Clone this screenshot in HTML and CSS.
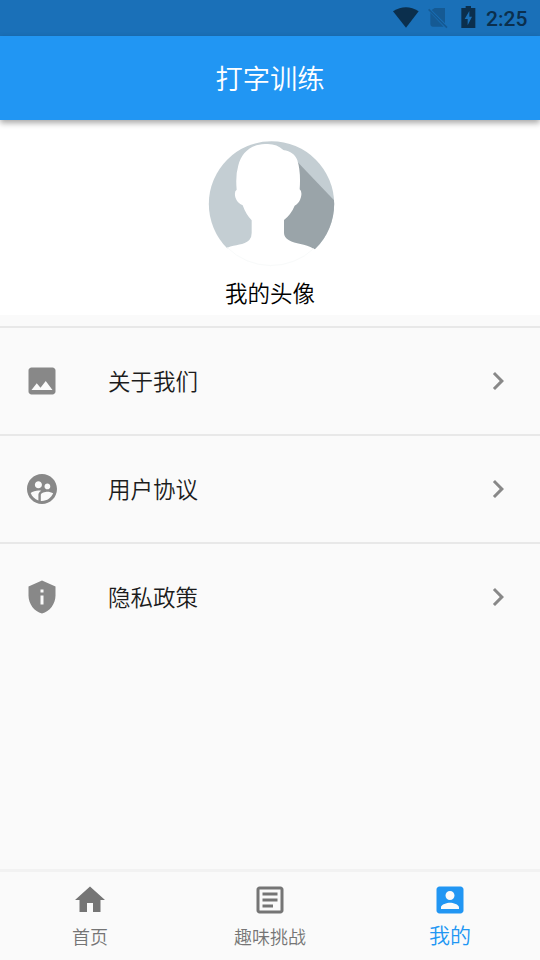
FILE: index.html
```html
<!DOCTYPE html>
<html lang="zh-CN">
<head>
<meta charset="utf-8">
<title>打字训练</title>
<link rel="stylesheet" href="styles.css">
</head>
<body>
<div class="app">
  <div class="status">
    <svg class="status-icons" width="100" height="36" viewBox="0 0 300 108">
      <path class="ink" d="M18 34Q57 9 95 34L57 83Z"/>
      <path class="dim" d="M143 24H174V70L134 30ZM130 38L170 80H137Q130 80 130 73Z"/>
      <path class="dim-line" d="M125 28L180 83"/>
      <path class="ink" fill-rule="evenodd" d="M223 24H236V18H252V24H265V84H223ZM247 33L233 57H242V76L255 50H247Z"/>
    </svg>
    <span class="clock">2:25</span>
  </div>
  <header class="bar"><h1>打字训练</h1></header>
  <section class="profile">
    <svg class="avatar" width="150" height="145" viewBox="0 0 450 435">
      <defs><clipPath id="disc"><circle cx="229.500" cy="222" r="188"/></clipPath></defs>
      <g clip-path="url(#disc)">
        <path class="light" d="M0 0H450V356H0Z"/>
        <path class="dark" d="M266 60L302 90L430 224V358H250Z"/>
        <path class="person" d="M0 435V408L97 353C122 343 146 346 163 330Q170 323 170 309V271Q153 254 143 226Q127 221 121 202Q117 184 125 179Q121 136 130 106C139 70 166 43 210 42Q244 39 265 60C287 63 301 74 307 91Q318 125 314 178Q322 184 318 201Q313 221 299 227Q289 252 267 270V309Q267 322 282 331C300 342 331 341 356 356L450 408V435Z"/>
      </g>
      <path class="disc-edge" d="M97 353A187 187 0 0 0 356 356"/>
    </svg>
    <div class="name">我的头像</div>
  </section>
  <main class="list">
    <div class="row">
      <svg class="icon" viewBox="0 0 24 24"><path d="M21 19V5c0-1.100-.9-2-2-2H5c-1.100 0-2 .9-2 2v14c0 1.100.9 2 2 2h14c1.100 0 2-.9 2-2zM8.500 13.500l2.500 3.010L14.500 12l4.500 6H5l3.500-4.500z"/></svg>
      <span class="label">关于我们</span>
      <svg class="icon" viewBox="0 0 24 24"><path d="M10 6L8.590 7.410 13.170 12l-4.580 4.590L10 18l6-6z"/></svg>
    </div>
    <div class="row">
      <svg class="icon" viewBox="0 0 24 24"><path d="M11.990 2c-5.520 0-10 4.480-10 10s4.480 10 10 10 10-4.480 10-10-4.480-10-10-10zm3.610 6.340c1.070 0 1.930.86 1.930 1.930 0 1.070-.86 1.930-1.930 1.930-1.070 0-1.930-.86-1.930-1.930-.01-1.070.86-1.930 1.930-1.930zm-6-1.580c1.300 0 2.360 1.060 2.360 2.360 0 1.300-1.060 2.360-2.360 2.360s-2.360-1.060-2.360-2.360c0-1.310 1.050-2.360 2.360-2.360zm0 9.130v3.750c-2.400-.75-4.300-2.600-5.140-4.960 1.050-1.120 3.670-1.690 5.140-1.690.53 0 1.200.08 1.900.22-1.640.87-1.900 2.020-1.900 2.680zM11.990 20c-.27 0-.53-.01-.79-.04v-4.070c0-1.420 2.940-2.130 4.400-2.130 1.070 0 2.920.39 3.840 1.150-1.170 2.970-4.060 5.090-7.450 5.090z"/></svg>
      <span class="label">用户协议</span>
      <svg class="icon" viewBox="0 0 24 24"><path d="M10 6L8.590 7.410 13.170 12l-4.580 4.590L10 18l6-6z"/></svg>
    </div>
    <div class="row">
      <svg class="icon" viewBox="0 0 24 24"><path fill-rule="evenodd" d="M12 1L3 5v6c0 5.550 3.840 10.740 9 12 5.160-1.260 9-6.450 9-12V5zM11 7h2v2h-2zM11 11h2v6h-2z"/></svg>
      <span class="label">隐私政策</span>
      <svg class="icon" viewBox="0 0 24 24"><path d="M10 6L8.590 7.410 13.170 12l-4.580 4.590L10 18l6-6z"/></svg>
    </div>
  </main>
  <nav class="tabs">
    <div class="tab">
      <svg class="icon" viewBox="0 0 24 24"><path d="M10 20v-6h4v6h5v-8h3L12 3 2 12h3v8z"/></svg>
      <span>首页</span>
    </div>
    <div class="tab">
      <svg class="icon" viewBox="0 0 24 24"><path fill-rule="evenodd" d="M5 3h14c1.100 0 2 .9 2 2v14c0 1.100-.9 2-2 2H5c-1.100 0-2-.9-2-2V5c0-1.100.9-2 2-2zM5 5v14h14V5zM7 7h10v2H7zM7 11h10v2H7zM7 15h7v2H7z"/></svg>
      <span>趣味挑战</span>
    </div>
    <div class="tab active">
      <svg class="icon" viewBox="0 0 24 24"><path d="M3 5v14c0 1.100.89 2 2 2h14c1.100 0 2-.9 2-2V5c0-1.100-.9-2-2-2H5c-1.110 0-2 .9-2 2zm12 4c0 1.660-1.340 3-3 3s-3-1.340-3-3 1.340-3 3-3 3 1.340 3 3zm-9 8c0-2 4-3.100 6-3.100s6 1.100 6 3.100v1H6v-1z"/></svg>
      <span>我的</span>
    </div>
  </nav>
</div>
</body>
</html>
```
FILE: styles.css
```css
* { box-sizing: border-box; }
body {
  margin: 0;
  font-family: "Noto Sans CJK SC", sans-serif;
  font-weight: 350;
  background: #fafafa;
}
svg { display: block; flex: none; }
.app { display: flex; flex-direction: column; width: 540px; height: 960px; overflow: hidden; }
.status {
  display: flex;
  align-items: center;
  justify-content: flex-end;
  height: 36px;
  padding-right: 12px;
  background: #1a70b8;
}
.status-icons { margin-right: -.6px; }
.clock {
  width: 42px;
  font: 500 21px/36px Roboto, sans-serif;
  color: #0b2f4d;
  white-space: nowrap;
  padding-top: 2px;
}
.ink { fill: #0b2f4d; }
.dim { fill: #155a94; }
.dim-line { stroke: #155a94; stroke-width: 5; }
.bar {
  display: flex;
  align-items: center;
  justify-content: center;
  height: 84px;
  padding-bottom: 2px;
  background: #2196f3;
  box-shadow: 0 3px 6px rgba(0, 0, 0, .35);
  z-index: 1;
}
.bar h1 { margin: 0; font-size: 27.3px; font-weight: 350; line-height: 40px; color: #fff; }
.profile {
  display: flex;
  flex-direction: column;
  align-items: center;
  height: 195px;
  padding-top: 10px;
  background: #fff;
}
.disc-edge { fill: none; stroke: #f8fafa; stroke-width: 3; }
.light { fill: #c4ced3; }
.dark { fill: #9aa4a9; }
.person { fill: #fff; }
.name { font-size: 22.5px; line-height: 34px; color: #000; }
.list { flex: 1; padding-top: 11px; }
.row {
  display: flex;
  align-items: center;
  height: 108px;
  padding: 0 24px;
  border-top: 2px solid #e8e8e8;
}
.icon { width: 36px; height: 36px; fill: #888; }
.label { flex: 1; margin-left: 48px; padding-bottom: 2px; font-size: 22.5px; line-height: 34px; color: #1c1c1c; }
.tabs { display: flex; height: 91px; border-top: 3px solid #f2f2f2; padding-top: 10px; }
.tab {
  flex: 1;
  display: flex;
  flex-direction: column;
  align-items: center;
  font-size: 18px;
  line-height: 36px;
  color: #757575;
}
.tab .icon { fill: #757575; }
.active { font-size: 21px; line-height: 32px; color: #2196f3; }
.active .icon { fill: #2196f3; }
```
